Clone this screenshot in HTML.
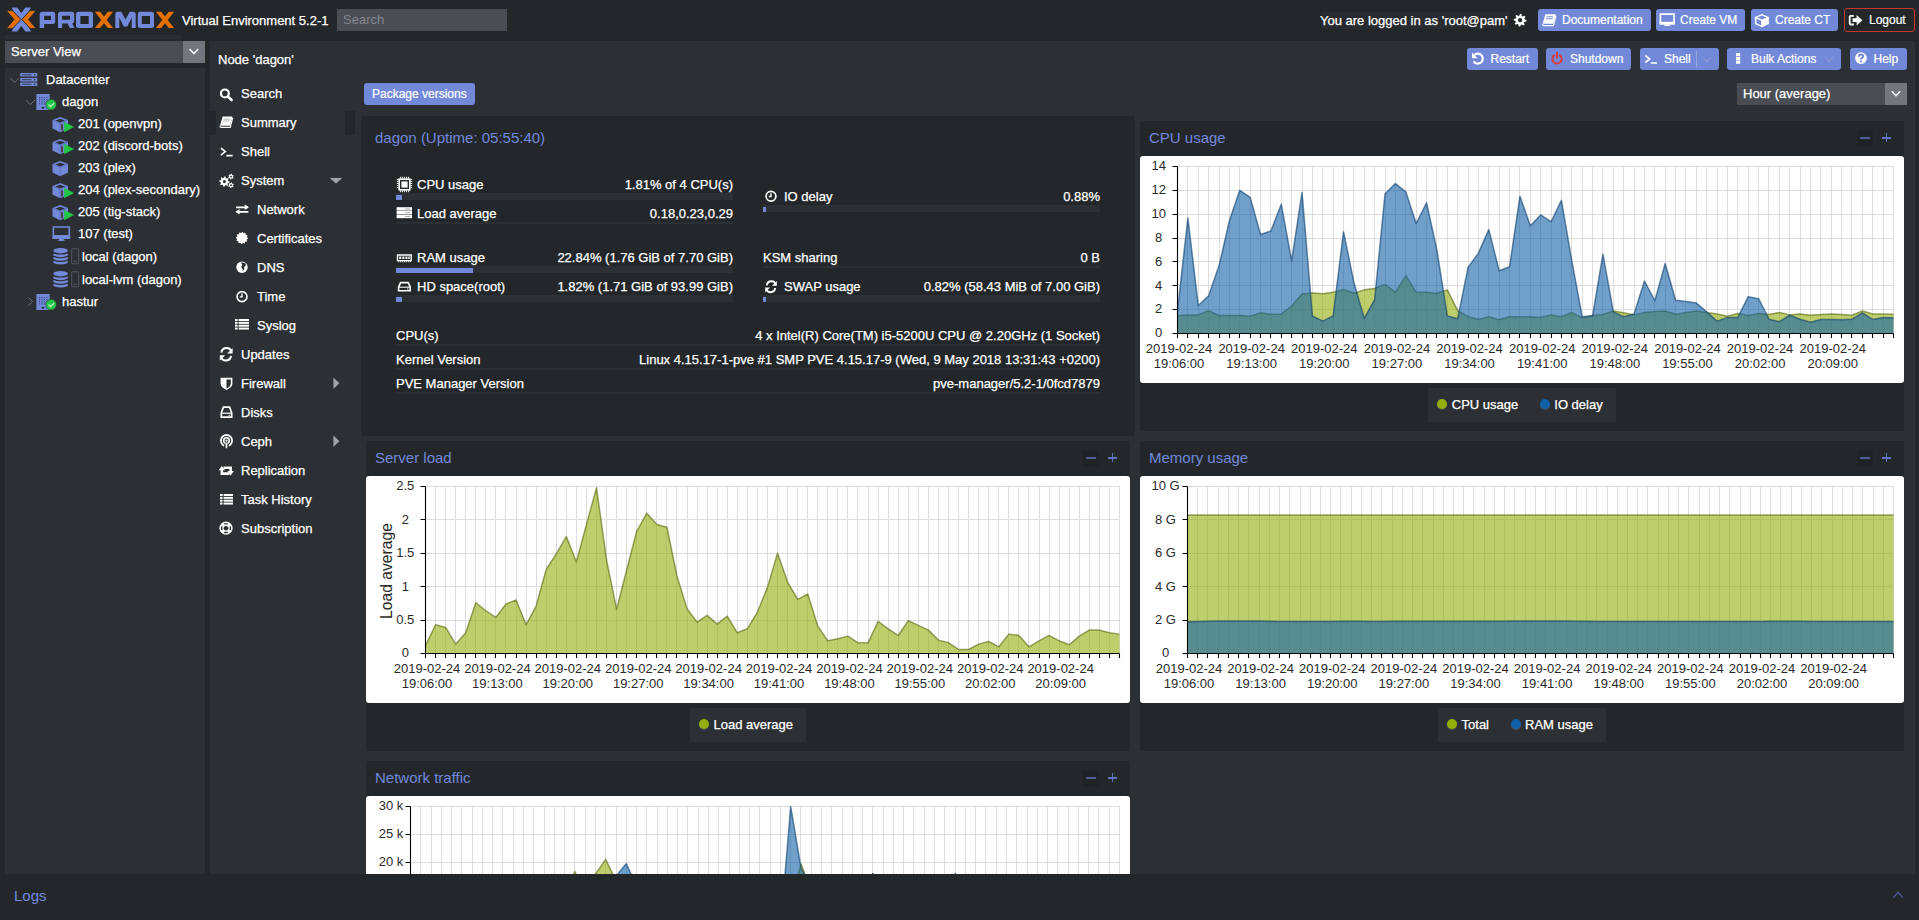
<!DOCTYPE html>
<html><head><meta charset="utf-8">
<style>
*{box-sizing:border-box;margin:0;padding:0}
html,body{width:1919px;height:920px;overflow:hidden;background:#23272a;font-family:"Liberation Sans",sans-serif;font-size:13px;color:#fff}
.a{position:absolute}
.t{position:absolute;white-space:nowrap;line-height:15px;height:15px;-webkit-text-stroke:0.25px currentColor}
.btn{position:absolute;background:#7289da;border-radius:3px;height:22px;color:#fff;font-size:12px;line-height:22px;white-space:nowrap;-webkit-text-stroke:0.2px #fff}
.bl{color:#7289da;-webkit-text-stroke:0}
svg{position:absolute;overflow:visible}
</style></head><body>
<!-- HEADER -->
<div id="hdr">
 <div class="t" style="left:182px;top:13px">Virtual Environment 5.2-1</div>
 <div class="a" style="left:337px;top:9px;width:170px;height:22px;background:#4a4d54"></div>
 <div class="t" style="left:343px;top:12px;color:#85888e;-webkit-text-stroke:0">Search</div>
 <div class="a" style="left:5px;top:35px;width:177px;height:4px;background:#2a2d31"></div>
 <div class="a" style="left:1321px;top:12px;width:188px;height:17px;background:#282b2f"></div>
 <div class="t" style="left:1320px;top:13px">You are logged in as 'root@pam'</div>
 <div class="btn" style="left:1538px;top:9px;width:113px"><span style="position:absolute;left:24px">Documentation</span></div>
 <div class="btn" style="left:1656px;top:9px;width:89px"><span style="position:absolute;left:24px">Create VM</span></div>
 <div class="btn" style="left:1751px;top:9px;width:87px"><span style="position:absolute;left:24px">Create CT</span></div>
 <div class="btn" style="left:1844px;top:8px;width:71px;height:24px;background:#23272a;border:1px solid #c0392b"><span style="position:absolute;left:24px;top:0">Logout</span></div>
</div>

<!-- LEFT TREE -->
<div class="a" style="left:5px;top:41px;width:178px;height:22px;background:#4a4d54"></div>
<div class="a" style="left:183px;top:41px;width:22px;height:22px;background:#72767d"></div>
<div class="t" style="left:11px;top:44px">Server View</div>
<div class="a" style="left:5px;top:68px;width:200px;height:806px;background:#2c2f33"></div>
<div id="tree">
 <div class="t" style="left:46px;top:72px">Datacenter</div>
 <div class="t" style="left:62px;top:94px">dagon</div>
 <div class="t" style="left:78px;top:116px">201 (openvpn)</div>
 <div class="t" style="left:78px;top:138px">202 (discord-bots)</div>
 <div class="t" style="left:78px;top:160px">203 (plex)</div>
 <div class="t" style="left:78px;top:182px">204 (plex-secondary)</div>
 <div class="t" style="left:78px;top:204px">205 (tig-stack)</div>
 <div class="t" style="left:78px;top:226px">107 (test)</div>
 <div class="t" style="left:82px;top:249px">local (dagon)</div>
 <div class="t" style="left:82px;top:272px">local-lvm (dagon)</div>
 <div class="t" style="left:62px;top:294px">hastur</div>
</div>

<!-- MAIN -->
<div class="a" style="left:210px;top:41px;width:1705px;height:833px;background:#2c2f33"></div>
<div class="t" style="left:218px;top:52px">Node 'dagon'</div>
<div id="nav">
 <div class="a" style="left:210px;top:111px;width:6px;height:24px;background:#23272a"></div>
 <div class="a" style="left:345px;top:111px;width:10px;height:24px;background:#23272a"></div>
 <div class="t" style="left:241px;top:86px">Search</div>
 <div class="t" style="left:241px;top:115px">Summary</div>
 <div class="t" style="left:241px;top:144px">Shell</div>
 <div class="t" style="left:241px;top:173px">System</div>
 <div class="t" style="left:257px;top:202px">Network</div>
 <div class="t" style="left:257px;top:231px">Certificates</div>
 <div class="t" style="left:257px;top:260px">DNS</div>
 <div class="t" style="left:257px;top:289px">Time</div>
 <div class="t" style="left:257px;top:318px">Syslog</div>
 <div class="t" style="left:241px;top:347px">Updates</div>
 <div class="t" style="left:241px;top:376px">Firewall</div>
 <div class="t" style="left:241px;top:405px">Disks</div>
 <div class="t" style="left:241px;top:434px">Ceph</div>
 <div class="t" style="left:241px;top:463px">Replication</div>
 <div class="t" style="left:241px;top:492px">Task History</div>
 <div class="t" style="left:241px;top:521px">Subscription</div>
</div>

<!-- toolbar -->
<div class="btn" style="left:364px;top:83px;width:111px"><span style="position:absolute;left:8px">Package versions</span></div>
<div class="btn" style="left:1467px;top:48px;width:71px"><span style="position:absolute;left:23.5px">Restart</span></div>
<div class="btn" style="left:1546px;top:48px;width:85px"><span style="position:absolute;left:24px">Shutdown</span></div>
<div class="btn" style="left:1640px;top:48px;width:79px"><span style="position:absolute;left:24px">Shell</span></div>
<div class="btn" style="left:1727px;top:48px;width:114px"><span style="position:absolute;left:24px">Bulk Actions</span></div>
<div class="btn" style="left:1850px;top:48px;width:57px"><span style="position:absolute;left:23.5px">Help</span></div>
<div class="a" style="left:1737px;top:83px;width:148px;height:22px;background:#4a4d54"></div>
<div class="a" style="left:1885px;top:83px;width:22px;height:22px;background:#72767d"></div>
<div class="t" style="left:1743px;top:86px">Hour (average)</div>

<!-- PANELS -->
<div class="a" style="left:361px;top:116px;width:774px;height:320px;background:#23272a"></div>
<div class="a" style="left:1140px;top:121px;width:764px;height:310px;background:#23272a"></div>
<div class="a" style="left:366px;top:441px;width:764px;height:310px;background:#23272a"></div>
<div class="a" style="left:1140px;top:441px;width:764px;height:310px;background:#23272a"></div>
<div class="a" style="left:366px;top:761px;width:764px;height:113px;background:#23272a"></div>


<div class="t bl" style="left:375px;top:129px;font-size:15px;line-height:17px;height:17px">dagon (Uptime: 05:55:40)</div>
<div class="t bl" style="left:1149px;top:129px;font-size:15px;line-height:17px;height:17px">CPU usage</div>
<div class="t bl" style="left:375px;top:449px;font-size:15px;line-height:17px;height:17px">Server load</div>
<div class="t bl" style="left:1149px;top:449px;font-size:15px;line-height:17px;height:17px">Memory usage</div>
<div class="t bl" style="left:375px;top:769px;font-size:15px;line-height:17px;height:17px">Network traffic</div>


<!-- SUMMARY CONTENT -->
<div id="sum">
 <div class="t" style="left:417px;top:177px">CPU usage</div>
 <div class="t" style="left:433px;top:177px;width:300px;text-align:right">1.81% of 4 CPU(s)</div>
 <div class="a" style="left:396px;top:193px;width:337px;height:7px;background:#2c2f33"></div>
 <div class="a" style="left:396px;top:195px;width:6px;height:5px;background:#7289da"></div>
 <div class="t" style="left:417px;top:206px">Load average</div>
 <div class="t" style="left:433px;top:206px;width:300px;text-align:right">0.18,0.23,0.29</div>
 <div class="a" style="left:396px;top:222px;width:337px;height:2px;background:#2c2f33"></div>
 <div class="t" style="left:417px;top:250px">RAM usage</div>
 <div class="t" style="left:433px;top:250px;width:300px;text-align:right">22.84% (1.76 GiB of 7.70 GiB)</div>
 <div class="a" style="left:396px;top:266px;width:337px;height:7px;background:#2c2f33"></div>
 <div class="a" style="left:396px;top:268px;width:77px;height:5px;background:#7289da"></div>
 <div class="t" style="left:417px;top:279px">HD space(root)</div>
 <div class="t" style="left:433px;top:279px;width:300px;text-align:right">1.82% (1.71 GiB of 93.99 GiB)</div>
 <div class="a" style="left:396px;top:295px;width:337px;height:7px;background:#2c2f33"></div>
 <div class="a" style="left:396px;top:297px;width:6px;height:5px;background:#7289da"></div>

 <div class="t" style="left:784px;top:189px">IO delay</div>
 <div class="t" style="left:800px;top:189px;width:300px;text-align:right">0.88%</div>
 <div class="a" style="left:763px;top:205px;width:337px;height:7px;background:#2c2f33"></div>
 <div class="a" style="left:763px;top:207px;width:3px;height:5px;background:#7289da"></div>
 <div class="t" style="left:763px;top:250px">KSM sharing</div>
 <div class="t" style="left:800px;top:250px;width:300px;text-align:right">0 B</div>
 <div class="a" style="left:763px;top:266px;width:337px;height:2px;background:#2c2f33"></div>
 <div class="t" style="left:784px;top:279px">SWAP usage</div>
 <div class="t" style="left:800px;top:279px;width:300px;text-align:right">0.82% (58.43 MiB of 7.00 GiB)</div>
 <div class="a" style="left:763px;top:295px;width:337px;height:7px;background:#2c2f33"></div>
 <div class="a" style="left:763px;top:297px;width:3px;height:5px;background:#7289da"></div>

 <div class="t" style="left:396px;top:328px">CPU(s)</div>
 <div class="t" style="left:600px;top:328px;width:500px;text-align:right">4 x Intel(R) Core(TM) i5-5200U CPU @ 2.20GHz (1 Socket)</div>
 <div class="a" style="left:396px;top:344px;width:704px;height:2px;background:#2c2f33"></div>
 <div class="t" style="left:396px;top:352px">Kernel Version</div>
 <div class="t" style="left:500px;top:352px;width:600px;text-align:right">Linux 4.15.17-1-pve #1 SMP PVE 4.15.17-9 (Wed, 9 May 2018 13:31:43 +0200)</div>
 <div class="a" style="left:396px;top:368px;width:704px;height:2px;background:#2c2f33"></div>
 <div class="t" style="left:396px;top:376px">PVE Manager Version</div>
 <div class="t" style="left:600px;top:376px;width:500px;text-align:right">pve-manager/5.2-1/0fcd7879</div>
 <div class="a" style="left:396px;top:392px;width:704px;height:2px;background:#2c2f33"></div>
</div>

<!-- CHARTS -->
<svg style="left:1140px;top:156px" width="764" height="227" viewBox="1140 156 764 227">
<rect x="1140" y="156" width="764" height="227" rx="3" fill="#fff"/>
<path d="M1177.5 166.5V333.5M1187.5 166.5V333.5M1198.5 166.5V333.5M1208.5 166.5V333.5M1219.5 166.5V333.5M1229.5 166.5V333.5M1239.5 166.5V333.5M1250.5 166.5V333.5M1260.5 166.5V333.5M1270.5 166.5V333.5M1281.5 166.5V333.5M1291.5 166.5V333.5M1302.5 166.5V333.5M1312.5 166.5V333.5M1322.5 166.5V333.5M1333.5 166.5V333.5M1343.5 166.5V333.5M1353.5 166.5V333.5M1364.5 166.5V333.5M1374.5 166.5V333.5M1385.5 166.5V333.5M1395.5 166.5V333.5M1405.5 166.5V333.5M1416.5 166.5V333.5M1426.5 166.5V333.5M1436.5 166.5V333.5M1447.5 166.5V333.5M1457.5 166.5V333.5M1468.5 166.5V333.5M1478.5 166.5V333.5M1488.5 166.5V333.5M1499.5 166.5V333.5M1509.5 166.5V333.5M1519.5 166.5V333.5M1530.5 166.5V333.5M1540.5 166.5V333.5M1551.5 166.5V333.5M1561.5 166.5V333.5M1571.5 166.5V333.5M1582.5 166.5V333.5M1592.5 166.5V333.5M1602.5 166.5V333.5M1613.5 166.5V333.5M1623.5 166.5V333.5M1634.5 166.5V333.5M1644.5 166.5V333.5M1654.5 166.5V333.5M1665.5 166.5V333.5M1675.5 166.5V333.5M1685.5 166.5V333.5M1696.5 166.5V333.5M1706.5 166.5V333.5M1717.5 166.5V333.5M1727.5 166.5V333.5M1737.5 166.5V333.5M1748.5 166.5V333.5M1758.5 166.5V333.5M1768.5 166.5V333.5M1779.5 166.5V333.5M1789.5 166.5V333.5M1800.5 166.5V333.5M1810.5 166.5V333.5M1820.5 166.5V333.5M1831.5 166.5V333.5M1841.5 166.5V333.5M1851.5 166.5V333.5M1862.5 166.5V333.5M1872.5 166.5V333.5M1883.5 166.5V333.5M1893.5 166.5V333.5M1177.5 333.5H1893.5M1177.5 309.5H1893.5M1177.5 285.5H1893.5M1177.5 261.5H1893.5M1177.5 238.5H1893.5M1177.5 214.5H1893.5M1177.5 190.5H1893.5M1177.5 166.5H1893.5" stroke="#ddd" stroke-width="1" fill="none"/>
<path d="M1177.5 333.5L1177.5 315.85L1187.88 314.89L1198.25 314.89L1208.63 310.6L1219.01 315.49L1229.38 315.49L1239.76 315.49L1250.14 316.2L1260.51 312.86L1270.89 314.3L1281.27 313.94L1291.64 306.06L1302.02 293.9L1312.4 292.94L1322.78 293.66L1333.15 292.35L1343.53 289.36L1353.91 293.3L1364.28 289.84L1374.66 288.41L1385.04 284.47L1395.41 292.35L1405.79 275.65L1416.17 292.35L1426.54 292.35L1436.92 293.3L1447.3 289.84L1457.67 310.6L1468.05 316.44L1478.43 319.42L1488.8 316.8L1499.18 319.78L1509.56 316.8L1519.93 316.8L1530.31 316.8L1540.69 317.4L1551.07 314.89L1561.44 316.8L1571.82 312.39L1582.2 317.87L1592.57 315.49L1602.95 314.53L1613.33 310.95L1623.7 312.86L1634.08 314.89L1644.46 312.51L1654.83 311.43L1665.21 310.95L1675.59 314.3L1685.96 312.39L1696.34 310.95L1706.72 312.51L1717.09 313.94L1727.47 316.2L1737.85 313.46L1748.22 315.49L1758.6 313.46L1768.98 314.53L1779.36 312.51L1789.73 314.89L1800.11 313.94L1810.49 315.25L1820.86 314.53L1831.24 313.94L1841.62 314.53L1851.99 315.25L1862.37 310.95L1872.75 313.94L1883.12 313.94L1893.5 314.3L1893.5 333.5Z" fill="#94ae0a" fill-opacity="0.6"/>
<path d="M1177.5 315.85L1187.88 314.89L1198.25 314.89L1208.63 310.6L1219.01 315.49L1229.38 315.49L1239.76 315.49L1250.14 316.2L1260.51 312.86L1270.89 314.3L1281.27 313.94L1291.64 306.06L1302.02 293.9L1312.4 292.94L1322.78 293.66L1333.15 292.35L1343.53 289.36L1353.91 293.3L1364.28 289.84L1374.66 288.41L1385.04 284.47L1395.41 292.35L1405.79 275.65L1416.17 292.35L1426.54 292.35L1436.92 293.3L1447.3 289.84L1457.67 310.6L1468.05 316.44L1478.43 319.42L1488.8 316.8L1499.18 319.78L1509.56 316.8L1519.93 316.8L1530.31 316.8L1540.69 317.4L1551.07 314.89L1561.44 316.8L1571.82 312.39L1582.2 317.87L1592.57 315.49L1602.95 314.53L1613.33 310.95L1623.7 312.86L1634.08 314.89L1644.46 312.51L1654.83 311.43L1665.21 310.95L1675.59 314.3L1685.96 312.39L1696.34 310.95L1706.72 312.51L1717.09 313.94L1727.47 316.2L1737.85 313.46L1748.22 315.49L1758.6 313.46L1768.98 314.53L1779.36 312.51L1789.73 314.89L1800.11 313.94L1810.49 315.25L1820.86 314.53L1831.24 313.94L1841.62 314.53L1851.99 315.25L1862.37 310.95L1872.75 313.94L1883.12 313.94L1893.5 314.3" fill="none" stroke="#57660a" stroke-opacity="0.6" stroke-width="1.5" stroke-linejoin="round"/>
<path d="M1177.5 333.5L1177.5 310.95L1187.88 217.91L1198.25 305.47L1208.63 295.69L1219.01 265.87L1229.38 220.78L1239.76 190.36L1250.14 197.28L1260.51 234.49L1270.89 231.03L1281.27 204.19L1291.64 260.97L1302.02 192.38L1312.4 315.85L1322.78 321.09L1333.15 315.85L1343.53 231.63L1353.91 282.56L1364.28 318.35L1374.66 299.62L1385.04 193.7L1395.41 183.56L1405.79 191.79L1416.17 223.52L1426.54 202.76L1436.92 250.24L1447.3 315.85L1457.67 318.83L1468.05 267.42L1478.43 253.1L1488.8 229.6L1499.18 270.76L1509.56 266.82L1519.93 196.32L1530.31 225.67L1540.69 214.93L1551.07 221.73L1561.44 200.26L1571.82 260.97L1582.2 316.8L1592.57 315.85L1602.95 254.18L1613.33 311.91L1623.7 316.8L1634.08 313.94L1644.46 281.01L1654.83 300.7L1665.21 263.48L1675.59 300.22L1685.96 301.53L1696.34 303.08L1706.72 311.91L1717.09 321.09L1727.47 317.4L1737.85 317.4L1748.22 296.64L1758.6 298.67L1768.98 319.19L1779.36 321.69L1789.73 315.25L1800.11 319.19L1810.49 322.29L1820.86 319.42L1831.24 319.42L1841.62 319.78L1851.99 319.19L1862.37 312.86L1872.75 319.42L1883.12 317.4L1893.5 317.87L1893.5 333.5Z" fill="#115fa6" fill-opacity="0.6"/>
<path d="M1177.5 310.95L1187.88 217.91L1198.25 305.47L1208.63 295.69L1219.01 265.87L1229.38 220.78L1239.76 190.36L1250.14 197.28L1260.51 234.49L1270.89 231.03L1281.27 204.19L1291.64 260.97L1302.02 192.38L1312.4 315.85L1322.78 321.09L1333.15 315.85L1343.53 231.63L1353.91 282.56L1364.28 318.35L1374.66 299.62L1385.04 193.7L1395.41 183.56L1405.79 191.79L1416.17 223.52L1426.54 202.76L1436.92 250.24L1447.3 315.85L1457.67 318.83L1468.05 267.42L1478.43 253.1L1488.8 229.6L1499.18 270.76L1509.56 266.82L1519.93 196.32L1530.31 225.67L1540.69 214.93L1551.07 221.73L1561.44 200.26L1571.82 260.97L1582.2 316.8L1592.57 315.85L1602.95 254.18L1613.33 311.91L1623.7 316.8L1634.08 313.94L1644.46 281.01L1654.83 300.7L1665.21 263.48L1675.59 300.22L1685.96 301.53L1696.34 303.08L1706.72 311.91L1717.09 321.09L1727.47 317.4L1737.85 317.4L1748.22 296.64L1758.6 298.67L1768.98 319.19L1779.36 321.69L1789.73 315.25L1800.11 319.19L1810.49 322.29L1820.86 319.42L1831.24 319.42L1841.62 319.78L1851.99 319.19L1862.37 312.86L1872.75 319.42L1883.12 317.4L1893.5 317.87" fill="none" stroke="#0b3e6d" stroke-opacity="0.6" stroke-width="1.5" stroke-linejoin="round"/>
<path d="M1177.5 166.5V333.5H1893.5M1172.5 333.5H1177.5M1172.5 309.5H1177.5M1172.5 285.5H1177.5M1172.5 261.5H1177.5M1172.5 238.5H1177.5M1172.5 214.5H1177.5M1172.5 190.5H1177.5M1172.5 166.5H1177.5M1177.5 333.5V338M1187.5 333.5V338M1198.5 333.5V338M1208.5 333.5V338M1219.5 333.5V338M1229.5 333.5V338M1239.5 333.5V338M1250.5 333.5V338M1260.5 333.5V338M1270.5 333.5V338M1281.5 333.5V338M1291.5 333.5V338M1302.5 333.5V338M1312.5 333.5V338M1322.5 333.5V338M1333.5 333.5V338M1343.5 333.5V338M1353.5 333.5V338M1364.5 333.5V338M1374.5 333.5V338M1385.5 333.5V338M1395.5 333.5V338M1405.5 333.5V338M1416.5 333.5V338M1426.5 333.5V338M1436.5 333.5V338M1447.5 333.5V338M1457.5 333.5V338M1468.5 333.5V338M1478.5 333.5V338M1488.5 333.5V338M1499.5 333.5V338M1509.5 333.5V338M1519.5 333.5V338M1530.5 333.5V338M1540.5 333.5V338M1551.5 333.5V338M1561.5 333.5V338M1571.5 333.5V338M1582.5 333.5V338M1592.5 333.5V338M1602.5 333.5V338M1613.5 333.5V338M1623.5 333.5V338M1634.5 333.5V338M1644.5 333.5V338M1654.5 333.5V338M1665.5 333.5V338M1675.5 333.5V338M1685.5 333.5V338M1696.5 333.5V338M1706.5 333.5V338M1717.5 333.5V338M1727.5 333.5V338M1737.5 333.5V338M1748.5 333.5V338M1758.5 333.5V338M1768.5 333.5V338M1779.5 333.5V338M1789.5 333.5V338M1800.5 333.5V338M1810.5 333.5V338M1820.5 333.5V338M1831.5 333.5V338M1841.5 333.5V338M1851.5 333.5V338M1862.5 333.5V338M1872.5 333.5V338M1883.5 333.5V338M1893.5 333.5V338" stroke="#000" stroke-width="1.1" fill="none"/>
<g fill="#2a2a2a" style="font-size:13px;font-family:'Liberation Sans',sans-serif"><text x="1158.7" y="337.3" text-anchor="middle">0</text><text x="1158.7" y="313.44" text-anchor="middle">2</text><text x="1158.7" y="289.59" text-anchor="middle">4</text><text x="1158.7" y="265.73" text-anchor="middle">6</text><text x="1158.7" y="241.87" text-anchor="middle">8</text><text x="1158.7" y="218.01" text-anchor="middle">10</text><text x="1158.7" y="194.16" text-anchor="middle">12</text><text x="1158.7" y="170.3" text-anchor="middle">14</text><text x="1179" y="352.7" text-anchor="middle">2019-02-24</text><text x="1179" y="367.6" text-anchor="middle">19:06:00</text><text x="1251.64" y="352.7" text-anchor="middle">2019-02-24</text><text x="1251.64" y="367.6" text-anchor="middle">19:13:00</text><text x="1324.28" y="352.7" text-anchor="middle">2019-02-24</text><text x="1324.28" y="367.6" text-anchor="middle">19:20:00</text><text x="1396.91" y="352.7" text-anchor="middle">2019-02-24</text><text x="1396.91" y="367.6" text-anchor="middle">19:27:00</text><text x="1469.55" y="352.7" text-anchor="middle">2019-02-24</text><text x="1469.55" y="367.6" text-anchor="middle">19:34:00</text><text x="1542.19" y="352.7" text-anchor="middle">2019-02-24</text><text x="1542.19" y="367.6" text-anchor="middle">19:41:00</text><text x="1614.83" y="352.7" text-anchor="middle">2019-02-24</text><text x="1614.83" y="367.6" text-anchor="middle">19:48:00</text><text x="1687.46" y="352.7" text-anchor="middle">2019-02-24</text><text x="1687.46" y="367.6" text-anchor="middle">19:55:00</text><text x="1760.1" y="352.7" text-anchor="middle">2019-02-24</text><text x="1760.1" y="367.6" text-anchor="middle">20:02:00</text><text x="1832.74" y="352.7" text-anchor="middle">2019-02-24</text><text x="1832.74" y="367.6" text-anchor="middle">20:09:00</text></g>
</svg>
<div class="a" style="left:1428.29px;top:388px;width:187.42px;height:34px;background:#2c2f33"></div>
<div class="a" style="left:1437.29px;top:399px;width:10px;height:10px;border-radius:5px;background:#94ae0a;box-shadow:0 1px 0 rgba(120,120,120,.45)"></div>
<div class="t" style="left:1451.79px;top:397px">CPU usage</div>
<div class="a" style="left:1539.79px;top:399px;width:10px;height:10px;border-radius:5px;background:#115fa6;box-shadow:0 1px 0 rgba(120,120,120,.45)"></div>
<div class="t" style="left:1554.29px;top:397px">IO delay</div>
<div class="a" style="left:1857px;top:130px;width:16px;height:16px;background:#202326"></div><div class="a" style="left:1860px;top:137.2px;width:10px;height:1.6px;background:#4f5c96"></div><div class="a" style="left:1881.8px;top:137.2px;width:9.2px;height:1.4px;background:#6273bd"></div><div class="a" style="left:1885.7px;top:133.2px;width:1.4px;height:9.2px;background:#6273bd"></div>
<svg style="left:366px;top:476px" width="764" height="227" viewBox="366 476 764 227">
<rect x="366" y="476" width="764" height="227" rx="3" fill="#fff"/>
<path d="M425.5 486.5V653.5M435.5 486.5V653.5M445.5 486.5V653.5M455.5 486.5V653.5M465.5 486.5V653.5M475.5 486.5V653.5M485.5 486.5V653.5M495.5 486.5V653.5M505.5 486.5V653.5M516.5 486.5V653.5M526.5 486.5V653.5M536.5 486.5V653.5M546.5 486.5V653.5M556.5 486.5V653.5M566.5 486.5V653.5M576.5 486.5V653.5M586.5 486.5V653.5M596.5 486.5V653.5M606.5 486.5V653.5M616.5 486.5V653.5M626.5 486.5V653.5M636.5 486.5V653.5M646.5 486.5V653.5M656.5 486.5V653.5M666.5 486.5V653.5M676.5 486.5V653.5M687.5 486.5V653.5M697.5 486.5V653.5M707.5 486.5V653.5M717.5 486.5V653.5M727.5 486.5V653.5M737.5 486.5V653.5M747.5 486.5V653.5M757.5 486.5V653.5M767.5 486.5V653.5M777.5 486.5V653.5M787.5 486.5V653.5M797.5 486.5V653.5M807.5 486.5V653.5M817.5 486.5V653.5M827.5 486.5V653.5M837.5 486.5V653.5M847.5 486.5V653.5M857.5 486.5V653.5M868.5 486.5V653.5M878.5 486.5V653.5M888.5 486.5V653.5M898.5 486.5V653.5M908.5 486.5V653.5M918.5 486.5V653.5M928.5 486.5V653.5M938.5 486.5V653.5M948.5 486.5V653.5M958.5 486.5V653.5M968.5 486.5V653.5M978.5 486.5V653.5M988.5 486.5V653.5M998.5 486.5V653.5M1008.5 486.5V653.5M1018.5 486.5V653.5M1028.5 486.5V653.5M1039.5 486.5V653.5M1049.5 486.5V653.5M1059.5 486.5V653.5M1069.5 486.5V653.5M1079.5 486.5V653.5M1089.5 486.5V653.5M1099.5 486.5V653.5M1109.5 486.5V653.5M1119.5 486.5V653.5M425.5 653.5H1119.5M425.5 620.5H1119.5M425.5 586.5H1119.5M425.5 553.5H1119.5M425.5 519.5H1119.5M425.5 486.5H1119.5" stroke="#ddd" stroke-width="1" fill="none"/>
<path d="M425.5 653.5L425.5 645.48L435.56 624.78L445.62 627.45L455.67 644.15L465.73 632.79L475.79 602.73L485.85 610.75L495.91 617.43L505.96 604.07L516.02 600.06L526.08 624.78L536.14 606.07L546.2 569.33L556.25 553.97L566.31 536.6L576.37 561.98L586.43 524.58L596.49 487.84L606.54 559.98L616.6 609.41L626.66 570L636.72 531.26L646.78 513.22L656.83 524.58L666.89 527.25L676.95 576.01L687.01 608.74L697.07 622.1L707.12 615.42L717.18 624.11L727.24 616.09L737.3 632.79L747.36 628.78L757.41 612.08L767.47 587.37L777.53 553.3L787.59 582.02L797.64 599.39L807.7 594.05L817.76 626.11L827.82 640.81L837.88 638.8L847.93 636.13L857.99 642.81L868.05 642.81L878.11 621.44L888.17 628.78L898.22 635.46L908.28 620.77L918.34 625.44L928.4 630.12L938.46 640.14L948.51 642.81L958.57 649.49L968.63 649.49L978.69 644.15L988.75 641.48L998.8 646.82L1008.86 634.13L1018.92 635.46L1028.98 646.82L1039.04 640.81L1049.09 635.46L1059.15 640.81L1069.21 644.82L1079.27 636.13L1089.33 630.12L1099.38 630.12L1109.44 632.79L1119.5 634.13L1119.5 653.5Z" fill="#94ae0a" fill-opacity="0.6"/>
<path d="M425.5 645.48L435.56 624.78L445.62 627.45L455.67 644.15L465.73 632.79L475.79 602.73L485.85 610.75L495.91 617.43L505.96 604.07L516.02 600.06L526.08 624.78L536.14 606.07L546.2 569.33L556.25 553.97L566.31 536.6L576.37 561.98L586.43 524.58L596.49 487.84L606.54 559.98L616.6 609.41L626.66 570L636.72 531.26L646.78 513.22L656.83 524.58L666.89 527.25L676.95 576.01L687.01 608.74L697.07 622.1L707.12 615.42L717.18 624.11L727.24 616.09L737.3 632.79L747.36 628.78L757.41 612.08L767.47 587.37L777.53 553.3L787.59 582.02L797.64 599.39L807.7 594.05L817.76 626.11L827.82 640.81L837.88 638.8L847.93 636.13L857.99 642.81L868.05 642.81L878.11 621.44L888.17 628.78L898.22 635.46L908.28 620.77L918.34 625.44L928.4 630.12L938.46 640.14L948.51 642.81L958.57 649.49L968.63 649.49L978.69 644.15L988.75 641.48L998.8 646.82L1008.86 634.13L1018.92 635.46L1028.98 646.82L1039.04 640.81L1049.09 635.46L1059.15 640.81L1069.21 644.82L1079.27 636.13L1089.33 630.12L1099.38 630.12L1109.44 632.79L1119.5 634.13" fill="none" stroke="#57660a" stroke-opacity="0.6" stroke-width="1.5" stroke-linejoin="round"/>
<path d="M425.5 486.5V653.5H1119.5M420.5 653.5H425.5M420.5 620.5H425.5M420.5 586.5H425.5M420.5 553.5H425.5M420.5 519.5H425.5M420.5 486.5H425.5M425.5 653.5V658M435.5 653.5V658M445.5 653.5V658M455.5 653.5V658M465.5 653.5V658M475.5 653.5V658M485.5 653.5V658M495.5 653.5V658M505.5 653.5V658M516.5 653.5V658M526.5 653.5V658M536.5 653.5V658M546.5 653.5V658M556.5 653.5V658M566.5 653.5V658M576.5 653.5V658M586.5 653.5V658M596.5 653.5V658M606.5 653.5V658M616.5 653.5V658M626.5 653.5V658M636.5 653.5V658M646.5 653.5V658M656.5 653.5V658M666.5 653.5V658M676.5 653.5V658M687.5 653.5V658M697.5 653.5V658M707.5 653.5V658M717.5 653.5V658M727.5 653.5V658M737.5 653.5V658M747.5 653.5V658M757.5 653.5V658M767.5 653.5V658M777.5 653.5V658M787.5 653.5V658M797.5 653.5V658M807.5 653.5V658M817.5 653.5V658M827.5 653.5V658M837.5 653.5V658M847.5 653.5V658M857.5 653.5V658M868.5 653.5V658M878.5 653.5V658M888.5 653.5V658M898.5 653.5V658M908.5 653.5V658M918.5 653.5V658M928.5 653.5V658M938.5 653.5V658M948.5 653.5V658M958.5 653.5V658M968.5 653.5V658M978.5 653.5V658M988.5 653.5V658M998.5 653.5V658M1008.5 653.5V658M1018.5 653.5V658M1028.5 653.5V658M1039.5 653.5V658M1049.5 653.5V658M1059.5 653.5V658M1069.5 653.5V658M1079.5 653.5V658M1089.5 653.5V658M1099.5 653.5V658M1109.5 653.5V658M1119.5 653.5V658" stroke="#000" stroke-width="1.1" fill="none"/>
<g fill="#2a2a2a" style="font-size:13px;font-family:'Liberation Sans',sans-serif"><text x="405.3" y="657.3" text-anchor="middle">0</text><text x="405.3" y="623.9" text-anchor="middle">0.5</text><text x="405.3" y="590.5" text-anchor="middle">1</text><text x="405.3" y="557.1" text-anchor="middle">1.5</text><text x="405.3" y="523.7" text-anchor="middle">2</text><text x="405.3" y="490.3" text-anchor="middle">2.5</text><text x="427" y="672.7" text-anchor="middle">2019-02-24</text><text x="427" y="687.6" text-anchor="middle">19:06:00</text><text x="497.41" y="672.7" text-anchor="middle">2019-02-24</text><text x="497.41" y="687.6" text-anchor="middle">19:13:00</text><text x="567.81" y="672.7" text-anchor="middle">2019-02-24</text><text x="567.81" y="687.6" text-anchor="middle">19:20:00</text><text x="638.22" y="672.7" text-anchor="middle">2019-02-24</text><text x="638.22" y="687.6" text-anchor="middle">19:27:00</text><text x="708.62" y="672.7" text-anchor="middle">2019-02-24</text><text x="708.62" y="687.6" text-anchor="middle">19:34:00</text><text x="779.03" y="672.7" text-anchor="middle">2019-02-24</text><text x="779.03" y="687.6" text-anchor="middle">19:41:00</text><text x="849.43" y="672.7" text-anchor="middle">2019-02-24</text><text x="849.43" y="687.6" text-anchor="middle">19:48:00</text><text x="919.84" y="672.7" text-anchor="middle">2019-02-24</text><text x="919.84" y="687.6" text-anchor="middle">19:55:00</text><text x="990.25" y="672.7" text-anchor="middle">2019-02-24</text><text x="990.25" y="687.6" text-anchor="middle">20:02:00</text><text x="1060.65" y="672.7" text-anchor="middle">2019-02-24</text><text x="1060.65" y="687.6" text-anchor="middle">20:09:00</text><text x="391.5" y="571" text-anchor="middle" transform="rotate(-90 391.5 571)" style="font-size:15.7px">Load average</text></g>
</svg>
<div class="a" style="left:689.98px;top:708px;width:116.05px;height:34px;background:#2c2f33"></div>
<div class="a" style="left:698.98px;top:719px;width:10px;height:10px;border-radius:5px;background:#94ae0a;box-shadow:0 1px 0 rgba(120,120,120,.45)"></div>
<div class="t" style="left:713.48px;top:717px">Load average</div>
<div class="a" style="left:1083px;top:450px;width:16px;height:16px;background:#202326"></div><div class="a" style="left:1086px;top:457.2px;width:10px;height:1.6px;background:#4f5c96"></div><div class="a" style="left:1107.8px;top:457.2px;width:9.2px;height:1.4px;background:#6273bd"></div><div class="a" style="left:1111.7px;top:453.2px;width:1.4px;height:9.2px;background:#6273bd"></div>
<svg style="left:1140px;top:476px" width="764" height="227" viewBox="1140 476 764 227">
<rect x="1140" y="476" width="764" height="227" rx="3" fill="#fff"/>
<path d="M1187.5 486.5V653.5M1197.5 486.5V653.5M1207.5 486.5V653.5M1218.5 486.5V653.5M1228.5 486.5V653.5M1238.5 486.5V653.5M1248.5 486.5V653.5M1259.5 486.5V653.5M1269.5 486.5V653.5M1279.5 486.5V653.5M1289.5 486.5V653.5M1300.5 486.5V653.5M1310.5 486.5V653.5M1320.5 486.5V653.5M1330.5 486.5V653.5M1340.5 486.5V653.5M1351.5 486.5V653.5M1361.5 486.5V653.5M1371.5 486.5V653.5M1381.5 486.5V653.5M1392.5 486.5V653.5M1402.5 486.5V653.5M1412.5 486.5V653.5M1422.5 486.5V653.5M1433.5 486.5V653.5M1443.5 486.5V653.5M1453.5 486.5V653.5M1463.5 486.5V653.5M1473.5 486.5V653.5M1484.5 486.5V653.5M1494.5 486.5V653.5M1504.5 486.5V653.5M1514.5 486.5V653.5M1525.5 486.5V653.5M1535.5 486.5V653.5M1545.5 486.5V653.5M1555.5 486.5V653.5M1566.5 486.5V653.5M1576.5 486.5V653.5M1586.5 486.5V653.5M1596.5 486.5V653.5M1607.5 486.5V653.5M1617.5 486.5V653.5M1627.5 486.5V653.5M1637.5 486.5V653.5M1647.5 486.5V653.5M1658.5 486.5V653.5M1668.5 486.5V653.5M1678.5 486.5V653.5M1688.5 486.5V653.5M1699.5 486.5V653.5M1709.5 486.5V653.5M1719.5 486.5V653.5M1729.5 486.5V653.5M1740.5 486.5V653.5M1750.5 486.5V653.5M1760.5 486.5V653.5M1770.5 486.5V653.5M1780.5 486.5V653.5M1791.5 486.5V653.5M1801.5 486.5V653.5M1811.5 486.5V653.5M1821.5 486.5V653.5M1832.5 486.5V653.5M1842.5 486.5V653.5M1852.5 486.5V653.5M1862.5 486.5V653.5M1873.5 486.5V653.5M1883.5 486.5V653.5M1893.5 486.5V653.5M1187.5 653.5H1893.5M1187.5 620.5H1893.5M1187.5 586.5H1893.5M1187.5 553.5H1893.5M1187.5 519.5H1893.5M1187.5 486.5H1893.5" stroke="#ddd" stroke-width="1" fill="none"/>
<path d="M1187.5 653.5L1187.5 514.89L1197.73 514.89L1207.96 514.89L1218.2 514.89L1228.43 514.89L1238.66 514.89L1248.89 514.89L1259.12 514.89L1269.36 514.89L1279.59 514.89L1289.82 514.89L1300.05 514.89L1310.28 514.89L1320.51 514.89L1330.75 514.89L1340.98 514.89L1351.21 514.89L1361.44 514.89L1371.67 514.89L1381.91 514.89L1392.14 514.89L1402.37 514.89L1412.6 514.89L1422.83 514.89L1433.07 514.89L1443.3 514.89L1453.53 514.89L1463.76 514.89L1473.99 514.89L1484.22 514.89L1494.46 514.89L1504.69 514.89L1514.92 514.89L1525.15 514.89L1535.38 514.89L1545.62 514.89L1555.85 514.89L1566.08 514.89L1576.31 514.89L1586.54 514.89L1596.78 514.89L1607.01 514.89L1617.24 514.89L1627.47 514.89L1637.7 514.89L1647.93 514.89L1658.17 514.89L1668.4 514.89L1678.63 514.89L1688.86 514.89L1699.09 514.89L1709.33 514.89L1719.56 514.89L1729.79 514.89L1740.02 514.89L1750.25 514.89L1760.49 514.89L1770.72 514.89L1780.95 514.89L1791.18 514.89L1801.41 514.89L1811.64 514.89L1821.88 514.89L1832.11 514.89L1842.34 514.89L1852.57 514.89L1862.8 514.89L1873.04 514.89L1883.27 514.89L1893.5 514.89L1893.5 653.5Z" fill="#94ae0a" fill-opacity="0.6"/>
<path d="M1187.5 514.89L1197.73 514.89L1207.96 514.89L1218.2 514.89L1228.43 514.89L1238.66 514.89L1248.89 514.89L1259.12 514.89L1269.36 514.89L1279.59 514.89L1289.82 514.89L1300.05 514.89L1310.28 514.89L1320.51 514.89L1330.75 514.89L1340.98 514.89L1351.21 514.89L1361.44 514.89L1371.67 514.89L1381.91 514.89L1392.14 514.89L1402.37 514.89L1412.6 514.89L1422.83 514.89L1433.07 514.89L1443.3 514.89L1453.53 514.89L1463.76 514.89L1473.99 514.89L1484.22 514.89L1494.46 514.89L1504.69 514.89L1514.92 514.89L1525.15 514.89L1535.38 514.89L1545.62 514.89L1555.85 514.89L1566.08 514.89L1576.31 514.89L1586.54 514.89L1596.78 514.89L1607.01 514.89L1617.24 514.89L1627.47 514.89L1637.7 514.89L1647.93 514.89L1658.17 514.89L1668.4 514.89L1678.63 514.89L1688.86 514.89L1699.09 514.89L1709.33 514.89L1719.56 514.89L1729.79 514.89L1740.02 514.89L1750.25 514.89L1760.49 514.89L1770.72 514.89L1780.95 514.89L1791.18 514.89L1801.41 514.89L1811.64 514.89L1821.88 514.89L1832.11 514.89L1842.34 514.89L1852.57 514.89L1862.8 514.89L1873.04 514.89L1883.27 514.89L1893.5 514.89" fill="none" stroke="#57660a" stroke-opacity="0.6" stroke-width="1.5" stroke-linejoin="round"/>
<path d="M1187.5 653.5L1187.5 621.77L1197.73 621.6L1207.96 621.27L1218.2 621.1L1228.43 621.1L1238.66 621.1L1248.89 621.1L1259.12 621.1L1269.36 621.27L1279.59 621.44L1289.82 621.44L1300.05 621.44L1310.28 621.44L1320.51 621.44L1330.75 621.44L1340.98 621.27L1351.21 621.27L1361.44 621.27L1371.67 621.44L1381.91 621.44L1392.14 621.27L1402.37 621.27L1412.6 621.27L1422.83 621.27L1433.07 621.27L1443.3 621.27L1453.53 621.27L1463.76 621.27L1473.99 621.27L1484.22 621.27L1494.46 621.27L1504.69 621.27L1514.92 621.1L1525.15 621.1L1535.38 620.93L1545.62 620.93L1555.85 620.93L1566.08 621.1L1576.31 621.27L1586.54 621.27L1596.78 621.44L1607.01 621.44L1617.24 621.44L1627.47 621.44L1637.7 621.44L1647.93 621.44L1658.17 621.44L1668.4 621.44L1678.63 621.44L1688.86 621.44L1699.09 621.44L1709.33 621.44L1719.56 621.44L1729.79 621.44L1740.02 621.44L1750.25 621.44L1760.49 621.44L1770.72 621.27L1780.95 621.27L1791.18 621.27L1801.41 621.27L1811.64 621.44L1821.88 621.44L1832.11 621.44L1842.34 621.44L1852.57 621.44L1862.8 621.44L1873.04 621.44L1883.27 621.44L1893.5 621.44L1893.5 653.5Z" fill="#115fa6" fill-opacity="0.6"/>
<path d="M1187.5 621.77L1197.73 621.6L1207.96 621.27L1218.2 621.1L1228.43 621.1L1238.66 621.1L1248.89 621.1L1259.12 621.1L1269.36 621.27L1279.59 621.44L1289.82 621.44L1300.05 621.44L1310.28 621.44L1320.51 621.44L1330.75 621.44L1340.98 621.27L1351.21 621.27L1361.44 621.27L1371.67 621.44L1381.91 621.44L1392.14 621.27L1402.37 621.27L1412.6 621.27L1422.83 621.27L1433.07 621.27L1443.3 621.27L1453.53 621.27L1463.76 621.27L1473.99 621.27L1484.22 621.27L1494.46 621.27L1504.69 621.27L1514.92 621.1L1525.15 621.1L1535.38 620.93L1545.62 620.93L1555.85 620.93L1566.08 621.1L1576.31 621.27L1586.54 621.27L1596.78 621.44L1607.01 621.44L1617.24 621.44L1627.47 621.44L1637.7 621.44L1647.93 621.44L1658.17 621.44L1668.4 621.44L1678.63 621.44L1688.86 621.44L1699.09 621.44L1709.33 621.44L1719.56 621.44L1729.79 621.44L1740.02 621.44L1750.25 621.44L1760.49 621.44L1770.72 621.27L1780.95 621.27L1791.18 621.27L1801.41 621.27L1811.64 621.44L1821.88 621.44L1832.11 621.44L1842.34 621.44L1852.57 621.44L1862.8 621.44L1873.04 621.44L1883.27 621.44L1893.5 621.44" fill="none" stroke="#0b3e6d" stroke-opacity="0.6" stroke-width="1.5" stroke-linejoin="round"/>
<path d="M1187.5 486.5V653.5H1893.5M1182.5 653.5H1187.5M1182.5 620.5H1187.5M1182.5 586.5H1187.5M1182.5 553.5H1187.5M1182.5 519.5H1187.5M1182.5 486.5H1187.5M1187.5 653.5V658M1197.5 653.5V658M1207.5 653.5V658M1218.5 653.5V658M1228.5 653.5V658M1238.5 653.5V658M1248.5 653.5V658M1259.5 653.5V658M1269.5 653.5V658M1279.5 653.5V658M1289.5 653.5V658M1300.5 653.5V658M1310.5 653.5V658M1320.5 653.5V658M1330.5 653.5V658M1340.5 653.5V658M1351.5 653.5V658M1361.5 653.5V658M1371.5 653.5V658M1381.5 653.5V658M1392.5 653.5V658M1402.5 653.5V658M1412.5 653.5V658M1422.5 653.5V658M1433.5 653.5V658M1443.5 653.5V658M1453.5 653.5V658M1463.5 653.5V658M1473.5 653.5V658M1484.5 653.5V658M1494.5 653.5V658M1504.5 653.5V658M1514.5 653.5V658M1525.5 653.5V658M1535.5 653.5V658M1545.5 653.5V658M1555.5 653.5V658M1566.5 653.5V658M1576.5 653.5V658M1586.5 653.5V658M1596.5 653.5V658M1607.5 653.5V658M1617.5 653.5V658M1627.5 653.5V658M1637.5 653.5V658M1647.5 653.5V658M1658.5 653.5V658M1668.5 653.5V658M1678.5 653.5V658M1688.5 653.5V658M1699.5 653.5V658M1709.5 653.5V658M1719.5 653.5V658M1729.5 653.5V658M1740.5 653.5V658M1750.5 653.5V658M1760.5 653.5V658M1770.5 653.5V658M1780.5 653.5V658M1791.5 653.5V658M1801.5 653.5V658M1811.5 653.5V658M1821.5 653.5V658M1832.5 653.5V658M1842.5 653.5V658M1852.5 653.5V658M1862.5 653.5V658M1873.5 653.5V658M1883.5 653.5V658M1893.5 653.5V658" stroke="#000" stroke-width="1.1" fill="none"/>
<g fill="#2a2a2a" style="font-size:13px;font-family:'Liberation Sans',sans-serif"><text x="1165.5" y="657.3" text-anchor="middle">0</text><text x="1165.5" y="623.9" text-anchor="middle">2 G</text><text x="1165.5" y="590.5" text-anchor="middle">4 G</text><text x="1165.5" y="557.1" text-anchor="middle">6 G</text><text x="1165.5" y="523.7" text-anchor="middle">8 G</text><text x="1165.5" y="490.3" text-anchor="middle">10 G</text><text x="1189" y="672.7" text-anchor="middle">2019-02-24</text><text x="1189" y="687.6" text-anchor="middle">19:06:00</text><text x="1260.62" y="672.7" text-anchor="middle">2019-02-24</text><text x="1260.62" y="687.6" text-anchor="middle">19:13:00</text><text x="1332.25" y="672.7" text-anchor="middle">2019-02-24</text><text x="1332.25" y="687.6" text-anchor="middle">19:20:00</text><text x="1403.87" y="672.7" text-anchor="middle">2019-02-24</text><text x="1403.87" y="687.6" text-anchor="middle">19:27:00</text><text x="1475.49" y="672.7" text-anchor="middle">2019-02-24</text><text x="1475.49" y="687.6" text-anchor="middle">19:34:00</text><text x="1547.12" y="672.7" text-anchor="middle">2019-02-24</text><text x="1547.12" y="687.6" text-anchor="middle">19:41:00</text><text x="1618.74" y="672.7" text-anchor="middle">2019-02-24</text><text x="1618.74" y="687.6" text-anchor="middle">19:48:00</text><text x="1690.36" y="672.7" text-anchor="middle">2019-02-24</text><text x="1690.36" y="687.6" text-anchor="middle">19:55:00</text><text x="1761.99" y="672.7" text-anchor="middle">2019-02-24</text><text x="1761.99" y="687.6" text-anchor="middle">20:02:00</text><text x="1833.61" y="672.7" text-anchor="middle">2019-02-24</text><text x="1833.61" y="687.6" text-anchor="middle">20:09:00</text></g>
</svg>
<div class="a" style="left:1438.05px;top:708px;width:167.91px;height:34px;background:#2c2f33"></div>
<div class="a" style="left:1447.05px;top:719px;width:10px;height:10px;border-radius:5px;background:#94ae0a;box-shadow:0 1px 0 rgba(120,120,120,.45)"></div>
<div class="t" style="left:1461.55px;top:717px">Total</div>
<div class="a" style="left:1510.52px;top:719px;width:10px;height:10px;border-radius:5px;background:#115fa6;box-shadow:0 1px 0 rgba(120,120,120,.45)"></div>
<div class="t" style="left:1525.02px;top:717px">RAM usage</div>
<div class="a" style="left:1857px;top:450px;width:16px;height:16px;background:#202326"></div><div class="a" style="left:1860px;top:457.2px;width:10px;height:1.6px;background:#4f5c96"></div><div class="a" style="left:1881.8px;top:457.2px;width:9.2px;height:1.4px;background:#6273bd"></div><div class="a" style="left:1885.7px;top:453.2px;width:1.4px;height:9.2px;background:#6273bd"></div>
<div class="a" style="left:366px;top:796px;width:764px;height:78px;overflow:hidden"><svg style="left:0;top:0" width="764" height="227" viewBox="366 796 764 227">
<rect x="366" y="796" width="764" height="227" rx="3" fill="#fff"/>
<path d="M410.5 806.5V973.5M420.5 806.5V973.5M431.5 806.5V973.5M441.5 806.5V973.5M451.5 806.5V973.5M461.5 806.5V973.5M472.5 806.5V973.5M482.5 806.5V973.5M492.5 806.5V973.5M502.5 806.5V973.5M513.5 806.5V973.5M523.5 806.5V973.5M533.5 806.5V973.5M544.5 806.5V973.5M554.5 806.5V973.5M564.5 806.5V973.5M574.5 806.5V973.5M585.5 806.5V973.5M595.5 806.5V973.5M605.5 806.5V973.5M616.5 806.5V973.5M626.5 806.5V973.5M636.5 806.5V973.5M646.5 806.5V973.5M657.5 806.5V973.5M667.5 806.5V973.5M677.5 806.5V973.5M687.5 806.5V973.5M698.5 806.5V973.5M708.5 806.5V973.5M718.5 806.5V973.5M729.5 806.5V973.5M739.5 806.5V973.5M749.5 806.5V973.5M759.5 806.5V973.5M770.5 806.5V973.5M780.5 806.5V973.5M790.5 806.5V973.5M800.5 806.5V973.5M811.5 806.5V973.5M821.5 806.5V973.5M831.5 806.5V973.5M842.5 806.5V973.5M852.5 806.5V973.5M862.5 806.5V973.5M872.5 806.5V973.5M883.5 806.5V973.5M893.5 806.5V973.5M903.5 806.5V973.5M913.5 806.5V973.5M924.5 806.5V973.5M934.5 806.5V973.5M944.5 806.5V973.5M955.5 806.5V973.5M965.5 806.5V973.5M975.5 806.5V973.5M985.5 806.5V973.5M996.5 806.5V973.5M1006.5 806.5V973.5M1016.5 806.5V973.5M1027.5 806.5V973.5M1037.5 806.5V973.5M1047.5 806.5V973.5M1057.5 806.5V973.5M1068.5 806.5V973.5M1078.5 806.5V973.5M1088.5 806.5V973.5M1098.5 806.5V973.5M1109.5 806.5V973.5M1119.5 806.5V973.5M410.5 973.5H1119.5M410.5 945.5H1119.5M410.5 917.5H1119.5M410.5 890.5H1119.5M410.5 862.5H1119.5M410.5 834.5H1119.5M410.5 806.5H1119.5" stroke="#ddd" stroke-width="1" fill="none"/>
<path d="M410.5 973.5L410.5 906.7L420.78 906.7L431.05 906.7L441.33 906.7L451.6 906.7L461.88 906.7L472.15 906.7L482.43 906.7L492.7 906.7L502.98 906.7L513.25 906.7L523.53 906.7L533.8 906.7L544.08 906.7L554.36 906.7L564.63 895.57L574.91 871.63L585.18 895.57L595.46 873.86L605.73 859.38L616.01 881.09L626.28 895.57L636.56 906.7L646.83 906.7L657.11 906.7L667.38 906.7L677.66 906.7L687.93 906.7L698.21 906.7L708.49 906.7L718.76 906.7L729.04 906.7L739.31 906.7L749.59 906.7L759.86 906.7L770.14 906.7L780.41 906.7L790.69 902.25L800.96 863.84L811.24 891.11L821.51 906.7L831.79 906.7L842.07 906.7L852.34 906.7L862.62 906.7L872.89 873.58L883.17 906.7L893.44 906.7L903.72 906.7L913.99 906.7L924.27 906.7L934.54 906.7L944.82 906.7L955.09 906.7L965.37 906.7L975.64 906.7L985.92 906.7L996.2 906.7L1006.47 906.7L1016.75 906.7L1027.02 906.7L1037.3 906.7L1047.57 906.7L1057.85 906.7L1068.12 906.7L1078.4 906.7L1088.67 906.7L1098.95 906.7L1109.22 906.7L1119.5 906.7L1119.5 973.5Z" fill="#94ae0a" fill-opacity="0.6"/>
<path d="M410.5 906.7L420.78 906.7L431.05 906.7L441.33 906.7L451.6 906.7L461.88 906.7L472.15 906.7L482.43 906.7L492.7 906.7L502.98 906.7L513.25 906.7L523.53 906.7L533.8 906.7L544.08 906.7L554.36 906.7L564.63 895.57L574.91 871.63L585.18 895.57L595.46 873.86L605.73 859.38L616.01 881.09L626.28 895.57L636.56 906.7L646.83 906.7L657.11 906.7L667.38 906.7L677.66 906.7L687.93 906.7L698.21 906.7L708.49 906.7L718.76 906.7L729.04 906.7L739.31 906.7L749.59 906.7L759.86 906.7L770.14 906.7L780.41 906.7L790.69 902.25L800.96 863.84L811.24 891.11L821.51 906.7L831.79 906.7L842.07 906.7L852.34 906.7L862.62 906.7L872.89 873.58L883.17 906.7L893.44 906.7L903.72 906.7L913.99 906.7L924.27 906.7L934.54 906.7L944.82 906.7L955.09 906.7L965.37 906.7L975.64 906.7L985.92 906.7L996.2 906.7L1006.47 906.7L1016.75 906.7L1027.02 906.7L1037.3 906.7L1047.57 906.7L1057.85 906.7L1068.12 906.7L1078.4 906.7L1088.67 906.7L1098.95 906.7L1109.22 906.7L1119.5 906.7" fill="none" stroke="#57660a" stroke-opacity="0.6" stroke-width="1.5" stroke-linejoin="round"/>
<path d="M410.5 973.5L410.5 912.27L420.78 912.27L431.05 912.27L441.33 912.27L451.6 912.27L461.88 912.27L472.15 912.27L482.43 912.27L492.7 912.27L502.98 912.27L513.25 912.27L523.53 912.27L533.8 912.27L544.08 912.27L554.36 912.27L564.63 912.27L574.91 912.27L585.18 912.27L595.46 912.27L605.73 895.57L616.01 876.08L626.28 863.61L636.56 886.1L646.83 901.13L657.11 912.27L667.38 912.27L677.66 912.27L687.93 912.27L698.21 912.27L708.49 912.27L718.76 912.27L729.04 912.27L739.31 912.27L749.59 912.27L759.86 912.27L770.14 906.7L780.41 930.08L790.69 806.5L800.96 867.73L811.24 887.22L821.51 906.7L831.79 912.27L842.07 912.27L852.34 912.27L862.62 901.13L872.89 873.58L883.17 901.13L893.44 912.27L903.72 912.27L913.99 912.27L924.27 912.27L934.54 912.27L944.82 912.27L955.09 873.3L965.37 912.27L975.64 912.27L985.92 912.27L996.2 912.27L1006.47 912.27L1016.75 912.27L1027.02 912.27L1037.3 912.27L1047.57 912.27L1057.85 912.27L1068.12 912.27L1078.4 912.27L1088.67 912.27L1098.95 912.27L1109.22 912.27L1119.5 912.27L1119.5 973.5Z" fill="#115fa6" fill-opacity="0.6"/>
<path d="M410.5 912.27L420.78 912.27L431.05 912.27L441.33 912.27L451.6 912.27L461.88 912.27L472.15 912.27L482.43 912.27L492.7 912.27L502.98 912.27L513.25 912.27L523.53 912.27L533.8 912.27L544.08 912.27L554.36 912.27L564.63 912.27L574.91 912.27L585.18 912.27L595.46 912.27L605.73 895.57L616.01 876.08L626.28 863.61L636.56 886.1L646.83 901.13L657.11 912.27L667.38 912.27L677.66 912.27L687.93 912.27L698.21 912.27L708.49 912.27L718.76 912.27L729.04 912.27L739.31 912.27L749.59 912.27L759.86 912.27L770.14 906.7L780.41 930.08L790.69 806.5L800.96 867.73L811.24 887.22L821.51 906.7L831.79 912.27L842.07 912.27L852.34 912.27L862.62 901.13L872.89 873.58L883.17 901.13L893.44 912.27L903.72 912.27L913.99 912.27L924.27 912.27L934.54 912.27L944.82 912.27L955.09 873.3L965.37 912.27L975.64 912.27L985.92 912.27L996.2 912.27L1006.47 912.27L1016.75 912.27L1027.02 912.27L1037.3 912.27L1047.57 912.27L1057.85 912.27L1068.12 912.27L1078.4 912.27L1088.67 912.27L1098.95 912.27L1109.22 912.27L1119.5 912.27" fill="none" stroke="#0b3e6d" stroke-opacity="0.6" stroke-width="1.5" stroke-linejoin="round"/>
<path d="M410.5 806.5V973.5H1119.5M405.5 973.5H410.5M405.5 945.5H410.5M405.5 917.5H410.5M405.5 890.5H410.5M405.5 862.5H410.5M405.5 834.5H410.5M405.5 806.5H410.5M410.5 973.5V978M420.5 973.5V978M431.5 973.5V978M441.5 973.5V978M451.5 973.5V978M461.5 973.5V978M472.5 973.5V978M482.5 973.5V978M492.5 973.5V978M502.5 973.5V978M513.5 973.5V978M523.5 973.5V978M533.5 973.5V978M544.5 973.5V978M554.5 973.5V978M564.5 973.5V978M574.5 973.5V978M585.5 973.5V978M595.5 973.5V978M605.5 973.5V978M616.5 973.5V978M626.5 973.5V978M636.5 973.5V978M646.5 973.5V978M657.5 973.5V978M667.5 973.5V978M677.5 973.5V978M687.5 973.5V978M698.5 973.5V978M708.5 973.5V978M718.5 973.5V978M729.5 973.5V978M739.5 973.5V978M749.5 973.5V978M759.5 973.5V978M770.5 973.5V978M780.5 973.5V978M790.5 973.5V978M800.5 973.5V978M811.5 973.5V978M821.5 973.5V978M831.5 973.5V978M842.5 973.5V978M852.5 973.5V978M862.5 973.5V978M872.5 973.5V978M883.5 973.5V978M893.5 973.5V978M903.5 973.5V978M913.5 973.5V978M924.5 973.5V978M934.5 973.5V978M944.5 973.5V978M955.5 973.5V978M965.5 973.5V978M975.5 973.5V978M985.5 973.5V978M996.5 973.5V978M1006.5 973.5V978M1016.5 973.5V978M1027.5 973.5V978M1037.5 973.5V978M1047.5 973.5V978M1057.5 973.5V978M1068.5 973.5V978M1078.5 973.5V978M1088.5 973.5V978M1098.5 973.5V978M1109.5 973.5V978M1119.5 973.5V978" stroke="#000" stroke-width="1.1" fill="none"/>
<g fill="#2a2a2a" style="font-size:13px;font-family:'Liberation Sans',sans-serif"><text x="391" y="977.3" text-anchor="middle">0</text><text x="391" y="949.47" text-anchor="middle">5 k</text><text x="391" y="921.63" text-anchor="middle">10 k</text><text x="391" y="893.8" text-anchor="middle">15 k</text><text x="391" y="865.97" text-anchor="middle">20 k</text><text x="391" y="838.13" text-anchor="middle">25 k</text><text x="391" y="810.3" text-anchor="middle">30 k</text><text x="412" y="992.7" text-anchor="middle">2019-02-24</text><text x="412" y="1007.6" text-anchor="middle">19:06:00</text><text x="483.93" y="992.7" text-anchor="middle">2019-02-24</text><text x="483.93" y="1007.6" text-anchor="middle">19:13:00</text><text x="555.86" y="992.7" text-anchor="middle">2019-02-24</text><text x="555.86" y="1007.6" text-anchor="middle">19:20:00</text><text x="627.78" y="992.7" text-anchor="middle">2019-02-24</text><text x="627.78" y="1007.6" text-anchor="middle">19:27:00</text><text x="699.71" y="992.7" text-anchor="middle">2019-02-24</text><text x="699.71" y="1007.6" text-anchor="middle">19:34:00</text><text x="771.64" y="992.7" text-anchor="middle">2019-02-24</text><text x="771.64" y="1007.6" text-anchor="middle">19:41:00</text><text x="843.57" y="992.7" text-anchor="middle">2019-02-24</text><text x="843.57" y="1007.6" text-anchor="middle">19:48:00</text><text x="915.49" y="992.7" text-anchor="middle">2019-02-24</text><text x="915.49" y="1007.6" text-anchor="middle">19:55:00</text><text x="987.42" y="992.7" text-anchor="middle">2019-02-24</text><text x="987.42" y="1007.6" text-anchor="middle">20:02:00</text><text x="1059.35" y="992.7" text-anchor="middle">2019-02-24</text><text x="1059.35" y="1007.6" text-anchor="middle">20:09:00</text></g>
</svg></div>
<div class="a" style="left:1083px;top:770px;width:16px;height:16px;background:#202326"></div><div class="a" style="left:1086px;top:777.2px;width:10px;height:1.6px;background:#4f5c96"></div><div class="a" style="left:1107.8px;top:777.2px;width:9.2px;height:1.4px;background:#6273bd"></div><div class="a" style="left:1111.7px;top:773.2px;width:1.4px;height:9.2px;background:#6273bd"></div>
<!-- /CHARTS -->
<!-- LOGS -->
<div class="t bl" style="left:14px;top:887px;font-size:15px;line-height:17px;height:17px">Logs</div>
<!-- ICONS -->
<svg style="left:0;top:0" width="1919" height="920"><polygon fill="#7289da" points="11.6,7.4 17.2,7.4 21.3,13 25.4,7.4 31,7.4 24.4,19.5 31,31.4 25.4,31.4 21.3,26 17.2,31.4 11.6,31.4 18.2,19.5"/>
<g fill="#e57000" stroke="#23272a" stroke-width="0.9"><polygon points="6.4,10.6 12.6,10.6 20.9,19.5 12.6,28.4 6.4,28.4 14.1,19.5"/><polygon points="36.2,10.6 30,10.6 21.7,19.5 30,28.4 36.2,28.4 28.5,19.5"/></g>
<path fill="#7289da" fill-rule="evenodd" d="M39.7 28V14.3Q39.7 11.8 42.2 11.8H52.7Q55.2 11.8 55.2 14.3V21.5Q55.2 24 52.7 24H44.2V28ZM44.2 15.8V20H51V15.8Z"/>
<path fill="#7289da" fill-rule="evenodd" d="M58 28V14.3Q58 11.8 60.5 11.8H71.7Q74.2 11.8 74.2 14.3V20.8Q74.2 23.3 72.2 23.5L74.6 28H69.8L67.6 23.6H62.1V28ZM62.1 15.8V19.8H70.1V15.8Z"/>
<path fill="#7289da" fill-rule="evenodd" d="M78.5 11.8H90.5Q93 11.8 93 14.3V25.5Q93 28 90.5 28H78.5Q76 28 76 25.5V14.3Q76 11.8 78.5 11.8ZM80.4 15.9V24H88.7V15.9Z"/>
<polygon fill="#e57000" points="94.9,11.8 100.2,11.8 104,16.6 107.8,11.8 113.1,11.8 106.7,19.9 113.1,28 107.8,28 104,23.2 100.2,28 94.9,28 101.3,19.9"/>
<path fill="#7289da" d="M115.3 28V14.3Q115.3 11.8 117.8 11.8H121.3L125.5 19.5L129.7 11.8H133.2Q135.7 11.8 135.7 14.3V28H131.7V17.5L127.3 26.6H123.7L119.3 17.5V28Z"/>
<path fill="#7289da" fill-rule="evenodd" d="M140.3 11.8H151.5Q154 11.8 154 14.3V25.5Q154 28 151.5 28H140.3Q137.8 28 137.8 25.5V14.3Q137.8 11.8 140.3 11.8ZM141.8 15.9V24H150V15.9Z"/>
<polygon fill="#e57000" points="155.9,11.8 161.2,11.8 165,16.6 168.8,11.8 174.1,11.8 167.7,19.9 174.1,28 168.8,28 165,23.2 161.2,28 155.9,28 162.3,19.9"/>
<path fill="#fff" fill-rule="evenodd" d="M1520.10,13.80 L1521.35,13.92 L1521.86,15.95 L1522.66,16.38 L1524.63,15.67 L1525.42,16.64 L1524.35,18.44 L1524.61,19.30 L1526.50,20.20 L1526.38,21.45 L1524.35,21.96 L1523.92,22.76 L1524.63,24.73 L1523.66,25.52 L1521.86,24.45 L1521.00,24.71 L1520.10,26.60 L1518.85,26.48 L1518.34,24.45 L1517.54,24.02 L1515.57,24.73 L1514.78,23.76 L1515.85,21.96 L1515.59,21.10 L1513.70,20.20 L1513.82,18.95 L1515.85,18.44 L1516.28,17.64 L1515.57,15.67 L1516.54,14.88 L1518.34,15.95 L1519.20,15.69Z M1522.20 20.20 A2.1 2.1 0 1 0 1518.00 20.20 A2.1 2.1 0 1 0 1522.20 20.20Z"/>
<g transform="translate(1542.2 14.2) scale(1.0)"><path fill="#fff" d="M3.2 0H13.6L11 9.6H0.4Z"/><path fill="none" stroke="#fff" stroke-width="1.2" d="M0.6 9.8Q0.2 11.4 1.6 11.4H11.2L13.8 1.4"/><path stroke="#7289da" stroke-width="1" d="M4.4 2.6H11M3.8 4.6H10.4"/></g>
<path fill="none" stroke="#fff" stroke-width="1.7" d="M1660.4 14.2H1674V23.6H1660.4Z"/><rect x="1659.6" y="21.8" width="15.2" height="2.6" fill="#fff"/><path fill="#fff" d="M1665.4 24.2H1669.1V25.1H1670.2V26H1664.3V25.1H1665.4Z"/>
<g transform="translate(1754.9 14.0)"><path fill="#fff" fill-rule="evenodd" d="M7 0L14 3V10L7 13.2L0 10V3Z M7 1.6L2.2 3.6L7 5.6L11.8 3.6Z M1.6 4.8V9.2L6.2 11.3V6.8Z"/></g>
<path fill="none" stroke="#fff" stroke-width="1.8" d="M1853.8 15.9H1850.6Q1849.7 15.9 1849.7 16.8V23.6Q1849.7 24.5 1850.6 24.5H1853.8"/><path fill="#fff" d="M1852.6 18.3H1856.6V15L1862.4 20.2L1856.6 25.4V22.1H1852.6Z"/>
<path fill="none" stroke="#fff" stroke-width="2.2" d="M1474.6 54.8A5 5 0 1 1 1473.6 61.3"/><path fill="#fff" d="M1472 52.6V58.2H1477.6Z"/>
<path fill="none" stroke="#e03a3a" stroke-width="2" stroke-linecap="round" d="M1554.2 55.3A4.6 4.6 0 1 0 1559.8 55.3M1557 52.8V57.8"/>
<g transform="translate(1644.7 55.0) scale(1)"><path fill="none" stroke="#fff" stroke-width="1.6" d="M0.6 0.5L5 4L0.6 7.5M6 8H12.3"/></g>
<path stroke="#9aa7e3" stroke-width="1" d="M1696.5 51V67"/>
<path fill="none" stroke="#8f9ac9" stroke-width="1.1" d="M1702.8 57.6L1707 61.5L1711.2 57.6"/>
<path fill="#fff" d="M1736 53.1H1740.2V56.3H1736ZM1736 56.9H1740.2V60.1H1736ZM1736 60.6H1740.2V63.8H1736Z"/>
<path fill="none" stroke="#8f9ac9" stroke-width="1.1" d="M1825.3 57.2L1829.2 61.6L1833 57.2"/>
<circle cx="1861" cy="58.1" r="5.9" fill="#fff"/><path fill="none" stroke="#7289da" stroke-width="1.9" d="M1858.9 56.7Q1858.9 54.5 1861 54.5Q1863.1 54.5 1863.1 56.4Q1863.1 57.6 1861.1 58.6V59.5"/><rect x="1860.1" y="60.6" width="1.9" height="1.8" fill="#7289da"/>
<path fill="none" stroke="#fff" stroke-width="1.4" d="M1891.7 91.2L1896 95.8L1900.3 91.2"/>
<path fill="none" stroke="#fff" stroke-width="1.4" d="M189.6 49L193.9 53.6L198.2 49"/>
<path fill="none" stroke="#4a5894" stroke-width="1.3" d="M1893.3 897.8L1898.1 892.3L1902.9 897.8"/>
<path fill="none" stroke="#6c6f75" stroke-width="1" d="M10.5 78.2L14.6 82.4L18.7 78.2M26.1 100.3L30.4 104.6L34.7 100.3M28.3 297.2L32.6 301.5L28.3 305.8"/>
<rect x="20.2" y="73.0" width="17.1" height="3.6" rx="0.6" fill="#7289da"/><path stroke="#2c2f33" stroke-width="0.9" d="M22 74.8H31.5"/><circle cx="34.6" cy="74.8" r="0.8" fill="#2c2f33"/>
<rect x="20.2" y="77.9" width="17.1" height="3.6" rx="0.6" fill="#7289da"/><path stroke="#2c2f33" stroke-width="0.9" d="M22 79.7H31.5"/><circle cx="34.6" cy="79.7" r="0.8" fill="#2c2f33"/>
<rect x="20.2" y="82.4" width="17.1" height="3.6" rx="0.6" fill="#7289da"/><path stroke="#2c2f33" stroke-width="0.9" d="M22 84.2H31.5"/><circle cx="34.6" cy="84.2" r="0.8" fill="#2c2f33"/>
<rect x="36.4" y="94" width="13.3" height="16" fill="#7289da"/><rect x="39.0" y="97.0" width="1.1" height="1.1" fill="#3b4470"/><rect x="41.4" y="97.0" width="1.1" height="1.1" fill="#3b4470"/><rect x="43.8" y="97.0" width="1.1" height="1.1" fill="#3b4470"/><rect x="46.2" y="97.0" width="1.1" height="1.1" fill="#3b4470"/><rect x="39.0" y="99.1" width="1.1" height="1.1" fill="#3b4470"/><rect x="41.4" y="99.1" width="1.1" height="1.1" fill="#3b4470"/><rect x="43.8" y="99.1" width="1.1" height="1.1" fill="#3b4470"/><rect x="46.2" y="99.1" width="1.1" height="1.1" fill="#3b4470"/><rect x="39.0" y="101.2" width="1.1" height="1.1" fill="#3b4470"/><rect x="41.4" y="101.2" width="1.1" height="1.1" fill="#3b4470"/><rect x="43.8" y="101.2" width="1.1" height="1.1" fill="#3b4470"/><rect x="46.2" y="101.2" width="1.1" height="1.1" fill="#3b4470"/><rect x="39.0" y="103.3" width="1.1" height="1.1" fill="#3b4470"/><rect x="41.4" y="103.3" width="1.1" height="1.1" fill="#3b4470"/><rect x="43.8" y="103.3" width="1.1" height="1.1" fill="#3b4470"/><rect x="46.2" y="103.3" width="1.1" height="1.1" fill="#3b4470"/><rect x="41.4" y="107" width="3.2" height="1.6" rx="0.8" fill="#1e2230"/><circle cx="51.099999999999994" cy="104.6" r="5.4" fill="#22c548" stroke="#2c2f33" stroke-width="0.6"/><path fill="none" stroke="#d8f5d8" stroke-width="1.2" d="M48.5 104.6L50.5 106.7L54.099999999999994 103.1"/>
<rect x="36.4" y="294" width="13.3" height="16" fill="#7289da"/><rect x="39.0" y="297.0" width="1.1" height="1.1" fill="#3b4470"/><rect x="41.4" y="297.0" width="1.1" height="1.1" fill="#3b4470"/><rect x="43.8" y="297.0" width="1.1" height="1.1" fill="#3b4470"/><rect x="46.2" y="297.0" width="1.1" height="1.1" fill="#3b4470"/><rect x="39.0" y="299.1" width="1.1" height="1.1" fill="#3b4470"/><rect x="41.4" y="299.1" width="1.1" height="1.1" fill="#3b4470"/><rect x="43.8" y="299.1" width="1.1" height="1.1" fill="#3b4470"/><rect x="46.2" y="299.1" width="1.1" height="1.1" fill="#3b4470"/><rect x="39.0" y="301.2" width="1.1" height="1.1" fill="#3b4470"/><rect x="41.4" y="301.2" width="1.1" height="1.1" fill="#3b4470"/><rect x="43.8" y="301.2" width="1.1" height="1.1" fill="#3b4470"/><rect x="46.2" y="301.2" width="1.1" height="1.1" fill="#3b4470"/><rect x="39.0" y="303.3" width="1.1" height="1.1" fill="#3b4470"/><rect x="41.4" y="303.3" width="1.1" height="1.1" fill="#3b4470"/><rect x="43.8" y="303.3" width="1.1" height="1.1" fill="#3b4470"/><rect x="46.2" y="303.3" width="1.1" height="1.1" fill="#3b4470"/><rect x="41.4" y="307" width="3.2" height="1.6" rx="0.8" fill="#1e2230"/><circle cx="51.099999999999994" cy="304.6" r="5.4" fill="#22c548" stroke="#2c2f33" stroke-width="0.6"/><path fill="none" stroke="#d8f5d8" stroke-width="1.2" d="M48.5 304.6L50.5 306.7L54.099999999999994 303.1"/>
<g transform="translate(52.5 117)"><path fill="#7289da" d="M7.7 0L15.5 3.1V11.6L7.7 15.2L0 11.6V3.1Z"/><path fill="#2c2f33" d="M7.7 1.7L12.6 3.6L7.7 5.6L2.8 3.6Z"/><path fill="none" stroke="#5566b0" stroke-width="0.7" d="M0.3 3.2L7.7 6.2L15.2 3.2M7.7 6.2V15"/><path fill="#4a3a3a" d="M8.6 7.3H10.4V13.2H8.6Z"/><path fill="#22c548" d="M11.6 4.7L21.5 10L11.6 15.2Z"/></g>
<g transform="translate(52.5 139)"><path fill="#7289da" d="M7.7 0L15.5 3.1V11.6L7.7 15.2L0 11.6V3.1Z"/><path fill="#2c2f33" d="M7.7 1.7L12.6 3.6L7.7 5.6L2.8 3.6Z"/><path fill="none" stroke="#5566b0" stroke-width="0.7" d="M0.3 3.2L7.7 6.2L15.2 3.2M7.7 6.2V15"/><path fill="#4a3a3a" d="M8.6 7.3H10.4V13.2H8.6Z"/><path fill="#22c548" d="M11.6 4.7L21.5 10L11.6 15.2Z"/></g>
<g transform="translate(52.5 161)"><path fill="#7289da" d="M7.7 0L15.5 3.1V11.6L7.7 15.2L0 11.6V3.1Z"/><path fill="#2c2f33" d="M7.7 1.7L12.6 3.6L7.7 5.6L2.8 3.6Z"/><path fill="none" stroke="#5566b0" stroke-width="0.7" d="M0.3 3.2L7.7 6.2L15.2 3.2M7.7 6.2V15"/></g>
<g transform="translate(52.5 183)"><path fill="#7289da" d="M7.7 0L15.5 3.1V11.6L7.7 15.2L0 11.6V3.1Z"/><path fill="#2c2f33" d="M7.7 1.7L12.6 3.6L7.7 5.6L2.8 3.6Z"/><path fill="none" stroke="#5566b0" stroke-width="0.7" d="M0.3 3.2L7.7 6.2L15.2 3.2M7.7 6.2V15"/><path fill="#4a3a3a" d="M8.6 7.3H10.4V13.2H8.6Z"/><path fill="#22c548" d="M11.6 4.7L21.5 10L11.6 15.2Z"/></g>
<g transform="translate(52.5 205)"><path fill="#7289da" d="M7.7 0L15.5 3.1V11.6L7.7 15.2L0 11.6V3.1Z"/><path fill="#2c2f33" d="M7.7 1.7L12.6 3.6L7.7 5.6L2.8 3.6Z"/><path fill="none" stroke="#5566b0" stroke-width="0.7" d="M0.3 3.2L7.7 6.2L15.2 3.2M7.7 6.2V15"/><path fill="#4a3a3a" d="M8.6 7.3H10.4V13.2H8.6Z"/><path fill="#22c548" d="M11.6 4.7L21.5 10L11.6 15.2Z"/></g>
<path fill="none" stroke="#7289da" stroke-width="1.6" d="M53.4 227H69.3V238.3H53.4Z"/><rect x="52.6" y="234.9" width="17.5" height="4.2" rx="0.5" fill="#7289da"/><path fill="#7289da" d="M59 239H63.8V240.3H64.6V241.1H58.2V240.3H59Z"/>
<ellipse cx="60.6" cy="250.7" rx="7.2" ry="2.7" fill="#7289da"/><path fill="#7289da" d="M53.4 253.4Q60.6 255.8 67.8 253.4V255.5Q60.6 258.8 53.4 255.5Z"/><path fill="#7289da" d="M53.4 257.1Q60.6 259.5 67.8 257.1V259.20000000000005Q60.6 262.5 53.4 259.20000000000005Z"/><path fill="#7289da" d="M53.4 260.8Q60.6 263.2 67.8 260.8V262.90000000000003Q60.6 266.2 53.4 262.90000000000003Z"/><rect x="71.7" y="248.8" width="7" height="15" rx="0.8" fill="none" stroke="#55585e" stroke-width="1"/><path stroke="#55585e" stroke-width="1" d="M73.4 261.3H77.0"/>
<ellipse cx="60.6" cy="273.7" rx="7.2" ry="2.7" fill="#7289da"/><path fill="#7289da" d="M53.4 276.4Q60.6 278.79999999999995 67.8 276.4V278.5Q60.6 281.79999999999995 53.4 278.5Z"/><path fill="#7289da" d="M53.4 280.09999999999997Q60.6 282.49999999999994 67.8 280.09999999999997V282.2Q60.6 285.49999999999994 53.4 282.2Z"/><path fill="#7289da" d="M53.4 283.79999999999995Q60.6 286.19999999999993 67.8 283.79999999999995V285.9Q60.6 289.19999999999993 53.4 285.9Z"/><rect x="71.7" y="271.8" width="7" height="15" rx="0.8" fill="none" stroke="#55585e" stroke-width="1"/><path stroke="#55585e" stroke-width="1" d="M73.4 284.3H77.0"/>
<circle cx="224.9" cy="93.4" r="3.9" fill="none" stroke="#fff" stroke-width="2.2"/><path stroke="#fff" stroke-width="2.6" stroke-linecap="round" d="M228 96.6L231.6 100"/>
<g transform="translate(219.6 116.6) scale(0.95)"><path fill="#fff" d="M3.2 0H13.6L11 9.6H0.4Z"/><path fill="none" stroke="#fff" stroke-width="1.2" d="M0.6 9.8Q0.2 11.4 1.6 11.4H11.2L13.8 1.4"/><path stroke="#a9acb2" stroke-width="1" d="M4.4 2.6H11M3.8 4.6H10.4"/></g>
<g transform="translate(220.3 147.6) scale(1)"><path fill="none" stroke="#fff" stroke-width="1.6" d="M0.6 0.5L5 4L0.6 7.5M6 8H12.3"/></g>
<path fill="#fff" fill-rule="evenodd" d="M224.40,176.40 L225.41,176.50 L225.82,178.18 L226.46,178.52 L228.08,177.92 L228.72,178.71 L227.82,180.18 L228.03,180.88 L229.60,181.60 L229.50,182.61 L227.82,183.02 L227.48,183.66 L228.08,185.28 L227.29,185.92 L225.82,185.02 L225.12,185.23 L224.40,186.80 L223.39,186.70 L222.98,185.02 L222.34,184.68 L220.72,185.28 L220.08,184.49 L220.98,183.02 L220.77,182.32 L219.20,181.60 L219.30,180.59 L220.98,180.18 L221.32,179.54 L220.72,177.92 L221.51,177.28 L222.98,178.18 L223.68,177.97Z M226.00 181.60 A1.6 1.6 0 1 0 222.80 181.60 A1.6 1.6 0 1 0 226.00 181.60Z"/>
<path fill="#fff" fill-rule="evenodd" d="M231.00,173.70 L231.75,173.80 L232.00,174.87 L232.41,175.19 L233.51,175.15 L233.80,175.85 L233.00,176.60 L232.93,177.12 L233.51,178.05 L233.05,178.65 L232.00,178.33 L231.52,178.53 L231.00,179.50 L230.25,179.40 L230.00,178.33 L229.59,178.01 L228.49,178.05 L228.20,177.35 L229.00,176.60 L229.07,176.08 L228.49,175.15 L228.95,174.55 L230.00,174.87 L230.48,174.67Z M231.90 176.60 A0.9 0.9 0 1 0 230.10 176.60 A0.9 0.9 0 1 0 231.90 176.60Z"/>
<path fill="#fff" fill-rule="evenodd" d="M231.00,182.30 L231.75,182.40 L232.00,183.47 L232.41,183.79 L233.51,183.75 L233.80,184.45 L233.00,185.20 L232.93,185.72 L233.51,186.65 L233.05,187.25 L232.00,186.93 L231.52,187.13 L231.00,188.10 L230.25,188.00 L230.00,186.93 L229.59,186.61 L228.49,186.65 L228.20,185.95 L229.00,185.20 L229.07,184.68 L228.49,183.75 L228.95,183.15 L230.00,183.47 L230.48,183.27Z M231.90 185.20 A0.9 0.9 0 1 0 230.10 185.20 A0.9 0.9 0 1 0 231.90 185.20Z"/>
<path fill="#a0a3a8" d="M329.7 178.1H342.3L336 183.6Z"/>
<path fill="none" stroke="#fff" stroke-width="1.8" d="M236 207.3H247.3M237 211.8H248.4"/><path fill="#fff" d="M244.7 204.6L249 207.3L244.7 210ZM239.6 209.1L235.3 211.8L239.6 214.5Z"/>
<path fill="#fff" fill-rule="evenodd" d="M242.00,232.00 L242.78,232.05 L243.32,233.07 L243.95,233.29 L245.00,232.80 L245.65,233.24 L245.61,234.39 L246.05,234.90 L247.20,235.00 L247.54,235.70 L246.93,236.68 L247.06,237.33 L248.00,238.00 L247.95,238.78 L246.93,239.32 L246.71,239.95 L247.20,241.00 L246.76,241.65 L245.61,241.61 L245.10,242.05 L245.00,243.20 L244.30,243.54 L243.32,242.93 L242.67,243.06 L242.00,244.00 L241.22,243.95 L240.68,242.93 L240.05,242.71 L239.00,243.20 L238.35,242.76 L238.39,241.61 L237.95,241.10 L236.80,241.00 L236.46,240.30 L237.07,239.32 L236.94,238.67 L236.00,238.00 L236.05,237.22 L237.07,236.68 L237.29,236.05 L236.80,235.00 L237.24,234.35 L238.39,234.39 L238.90,233.95 L239.00,232.80 L239.70,232.46 L240.68,233.07 L241.33,232.94Z M242.01 238.00 A0.01 0.01 0 1 0 241.99 238.00 A0.01 0.01 0 1 0 242.01 238.00Z"/>
<circle cx="242" cy="267.3" r="5.7" fill="#fff"/><path fill="#2c2f33" d="M240.2 262.8Q242.8 263.8 242 265.6Q240.6 266.4 241.8 268Q243.4 269.2 242.6 271.2Q244.8 269.6 244.4 268Q243.6 266.8 245.2 266.2Q246.2 265 245.6 263.6Q243 262 240.2 262.8Z"/>
<circle cx="242" cy="296.6" r="5" fill="none" stroke="#fff" stroke-width="1.6"/><path fill="none" stroke="#fff" stroke-width="1.4" d="M242 293.6V296.9H239.8"/>
<rect x="235" y="319.00" width="2.6" height="2" fill="#fff"/><rect x="238.6" y="319.00" width="10.4" height="2" fill="#fff"/><rect x="235" y="321.85" width="2.6" height="2" fill="#fff"/><rect x="238.6" y="321.85" width="10.4" height="2" fill="#fff"/><rect x="235" y="324.70" width="2.6" height="2" fill="#fff"/><rect x="238.6" y="324.70" width="10.4" height="2" fill="#fff"/><rect x="235" y="327.55" width="2.6" height="2" fill="#fff"/><rect x="238.6" y="327.55" width="10.4" height="2" fill="#fff"/>
<path fill="none" stroke="#fff" stroke-width="2" d="M231.4 351.2A5.2 5.2 0 0 0 221.4 352.6M221 357.2A5.2 5.2 0 0 0 231 356"/><path fill="#fff" d="M232.6 348V353.4H227.2ZM219.8 360.6V355.2H225.2Z"/>
<path fill="#fff" d="M220.6 377.8H232.4V383.6Q232.4 387.6 226.5 390Q220.6 387.6 220.6 383.6Z"/><path fill="#2c2f33" d="M226.5 379.4H230.8V383.4Q230.8 386.6 226.5 388.2Z"/>
<path fill="#a0a3a8" d="M333.4 377.6L339.4 383.3L333.4 389ZM333.4 435.6L339.4 441.3L333.4 447Z"/>
<path fill="none" stroke="#fff" stroke-width="1.7" d="M221.3 412.8L223.4 407.2H229.6L231.7 412.8V417.2H221.3Z"/><path stroke="#fff" stroke-width="1.2" d="M221.6 413.2H231.4"/><circle cx="229.2" cy="415.3" r="0.7" fill="#fff"/>
<circle cx="226.5" cy="440.6" r="5.6" fill="none" stroke="#fff" stroke-width="1.8"/><circle cx="226.5" cy="440.6" r="2.8" fill="none" stroke="#fff" stroke-width="1.6"/><circle cx="226.5" cy="440.6" r="1.1" fill="#fff"/><path fill="#2c2f33" d="M223.6 447.5L225.2 442.3H227.8L229.4 447.5Z"/><path fill="#fff" d="M225.4 442.6H227.6L227.2 448.2H225.8Z"/>
<path fill="none" stroke="#fff" stroke-width="2.6" d="M221.85 469.6V473.65H229.5M230.65 471.2V467.75H223.5"/><path fill="#fff" d="M218.6 470.2L221.85 465.9L225.1 470.2ZM227.4 470.9H233.9L230.65 475.4Z"/>
<rect x="220" y="494.00" width="2.6" height="2" fill="#fff"/><rect x="223.6" y="494.00" width="9.4" height="2" fill="#fff"/><rect x="220" y="496.85" width="2.6" height="2" fill="#fff"/><rect x="223.6" y="496.85" width="9.4" height="2" fill="#fff"/><rect x="220" y="499.70" width="2.6" height="2" fill="#fff"/><rect x="223.6" y="499.70" width="9.4" height="2" fill="#fff"/><rect x="220" y="502.55" width="2.6" height="2" fill="#fff"/><rect x="223.6" y="502.55" width="9.4" height="2" fill="#fff"/>
<circle cx="226" cy="528.2" r="6.6" fill="#fff"/><circle cx="226" cy="528.2" r="2.3" fill="#2c2f33"/><path fill="#2c2f33" d="M224.2 523.2H227.8V524.6H224.2ZM224.2 531.8H227.8V533.2H224.2ZM221 526.4H222.4V530H221ZM229.6 526.4H231V530H229.6Z"/>
<rect x="399.2" y="179.2" width="10.6" height="10.6" fill="none" stroke="#fff" stroke-width="1.6"/><rect x="401.4" y="181.4" width="6.2" height="6.2" fill="#fff"/>
<path stroke="#fff" stroke-width="1" d="M400.40 176.8V178.6M400.40 190.4V192.2M396.8 179.40H398.6M410.4 179.40H412.2M402.45 176.8V178.6M402.45 190.4V192.2M396.8 181.45H398.6M410.4 181.45H412.2M404.50 176.8V178.6M404.50 190.4V192.2M396.8 183.50H398.6M410.4 183.50H412.2M406.55 176.8V178.6M406.55 190.4V192.2M396.8 185.55H398.6M410.4 185.55H412.2M408.60 176.8V178.6M408.60 190.4V192.2M396.8 187.60H398.6M410.4 187.60H412.2"/>
<rect x="396.6" y="207.2" width="15.4" height="3.4" fill="#fff"/><path stroke="#9a9a9a" stroke-width="0.8" d="M405 208.89999999999998H410.4"/>
<rect x="396.6" y="211.0" width="15.4" height="3.4" fill="#fff"/><path stroke="#9a9a9a" stroke-width="0.8" d="M405 212.7H410.4"/>
<rect x="396.6" y="214.8" width="15.4" height="3.4" fill="#fff"/><path stroke="#9a9a9a" stroke-width="0.8" d="M405 216.5H410.4"/>
<path fill="none" stroke="#fff" stroke-width="1.4" d="M397.5 255H411.2V260.6H397.5Z"/><path fill="#fff" d="M399.2 256.6H401.2V258.9H399.2ZM402.3 256.6H404.3V258.9H402.3ZM405.4 256.6H407.4V258.9H405.4ZM408.3 256.6H409.8V258.9H408.3Z"/><path stroke="#fff" stroke-width="0.9" d="M398.6 260.8V262.3M400.6 260.8V262.3M402.6 260.8V262.3M404.6 260.8V262.3M406.6 260.8V262.3M408.6 260.8V262.3M410.4 260.8V262.3"/>
<path fill="none" stroke="#fff" stroke-width="1.6" d="M398.6 287L400.6 282.6H408.2L410.2 287V290.8H398.6Z"/><path stroke="#fff" stroke-width="1.1" d="M398.8 287.2H410"/><circle cx="407.8" cy="289" r="0.7" fill="#fff"/>
<circle cx="771" cy="196.2" r="4.9" fill="none" stroke="#fff" stroke-width="1.7"/><path fill="none" stroke="#fff" stroke-width="1.4" d="M771 193.3V196.5H768.8"/>
<path fill="none" stroke="#fff" stroke-width="1.9" d="M775.6 284A4.6 4.6 0 0 0 766.8 285.4M766.4 289.4A4.6 4.6 0 0 0 775.2 288"/><path fill="#fff" d="M776.8 281V285.8H772ZM765.2 292.4V287.6H770Z"/></svg>
<!-- /ICONS -->
</body></html>
